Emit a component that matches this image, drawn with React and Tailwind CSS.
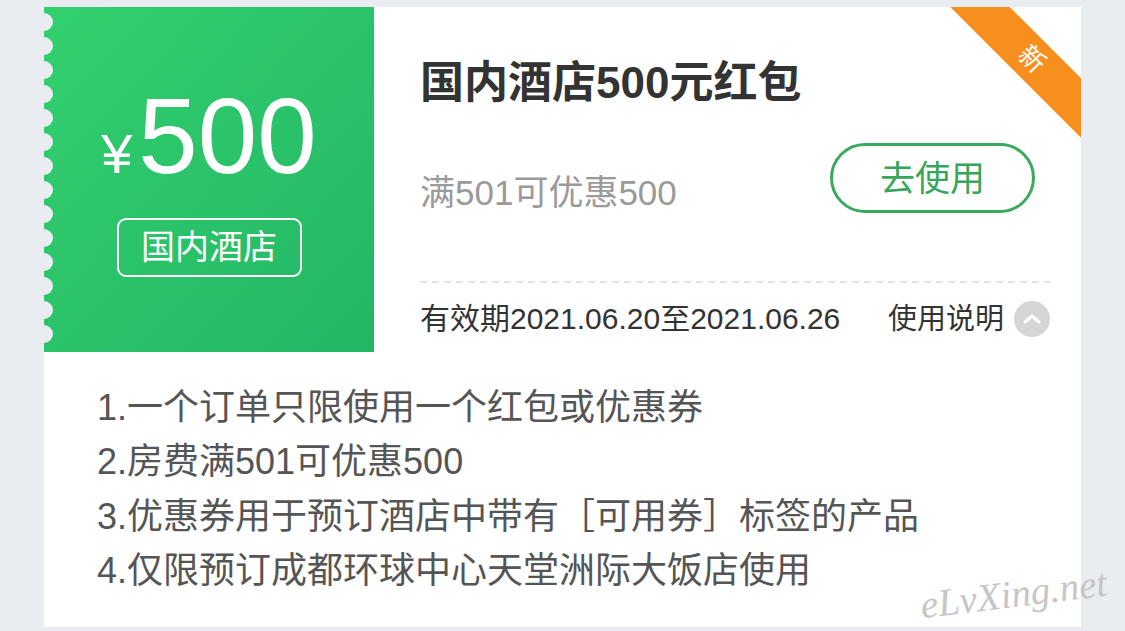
export default function App() {
  const scallops = Array.from({ length: 14 });
  const items = [
    "1.一个订单只限使用一个红包或优惠券",
    "2.房费满501可优惠500",
    "3.优惠券用于预订酒店中带有［可用券］标签的产品",
    "4.仅限预订成都环球中心天堂洲际大饭店使用",
  ];
  return (
    <div className="relative w-[1125px] h-[631px] overflow-hidden bg-[#e9ecf1] pt-[7px] pl-[44px] font-['Liberation_Sans','Noto_Sans_CJK_SC',sans-serif]">
      <div className="relative w-[1037px] h-[620px] overflow-hidden bg-white">
        <div className="flex h-[345px]">
          <div className="relative flex w-[330px] shrink-0 flex-col items-center justify-center bg-linear-to-br from-[#33d06e] to-[#22b665] text-white">
            <div className="absolute left-[-9px] top-[6px] flex flex-col gap-[6px]">
              {scallops.map((_, i) => (
                <div key={i} className="h-[18px] w-[18px] rounded-full bg-[#e9ecf1]" />
              ))}
            </div>
            <div className="flex items-baseline">
              <span className="mr-[6px] text-[56px] leading-none">¥</span>
              <span className="text-[107px] leading-none">500</span>
            </div>
            <div className="mt-[28px] flex h-[59px] w-[185px] items-center justify-center rounded-[9px] border-2 border-white text-[34px] leading-none">
              国内酒店
            </div>
          </div>
          <div className="flex flex-1 flex-col pl-[46px] pr-[31px] pt-[50px]">
            <div className="text-[44px] font-bold leading-[52px] text-[#333]">国内酒店500元红包</div>
            <div className="mt-[34px] flex items-end justify-between">
              <div className="text-[35px] leading-[40px] text-[#9a9a9a]">满501可优惠500</div>
              <div className="mr-[15px] flex h-[70px] w-[205px] items-center justify-center rounded-full border-[3px] border-[#3aa85f] text-[35px] leading-none text-[#36a65b]">
                去使用
              </div>
            </div>
            <div className="mt-[68px] h-[2px] w-full bg-[linear-gradient(to_right,#e4e4e4_55%,transparent_55%)] bg-size-[12px_2px] bg-repeat-x" />
            <div className="mt-[18px] flex h-[36px] items-center justify-between text-[#333]">
              <div className="text-[30px] leading-none">有效期2021.06.20至2021.06.26</div>
              <div className="flex items-center gap-[10px]">
                <span className="text-[29px] leading-none">使用说明</span>
                <div className="flex h-[36px] w-[36px] items-center justify-center rounded-full bg-[#d6d6d6]">
                  <svg width="18" height="12" viewBox="0 0 18 12" fill="none">
                    <path d="M2 9 L9 3 L16 9" stroke="white" strokeWidth="3" strokeLinecap="round" strokeLinejoin="round" />
                  </svg>
                </div>
              </div>
            </div>
          </div>
        </div>
        <div className="pl-[53px] pt-[29px] text-[36px] leading-[54.3px] text-[#555]">
          {items.map((t) => (
            <div key={t}>{t}</div>
          ))}
        </div>
        <div className="absolute right-[-61px] top-[31px] flex h-[42px] w-[220px] rotate-45 items-center justify-center bg-[#f78f1e] text-[26px] leading-none text-white">
          新
        </div>
      </div>
      <div className="absolute left-[920px] top-[574px] rotate-[-7deg] font-['Liberation_Serif',serif] text-[39px] italic leading-none text-[#c6c6c6]">
        eLvXing.net
      </div>
    </div>
  );
}
